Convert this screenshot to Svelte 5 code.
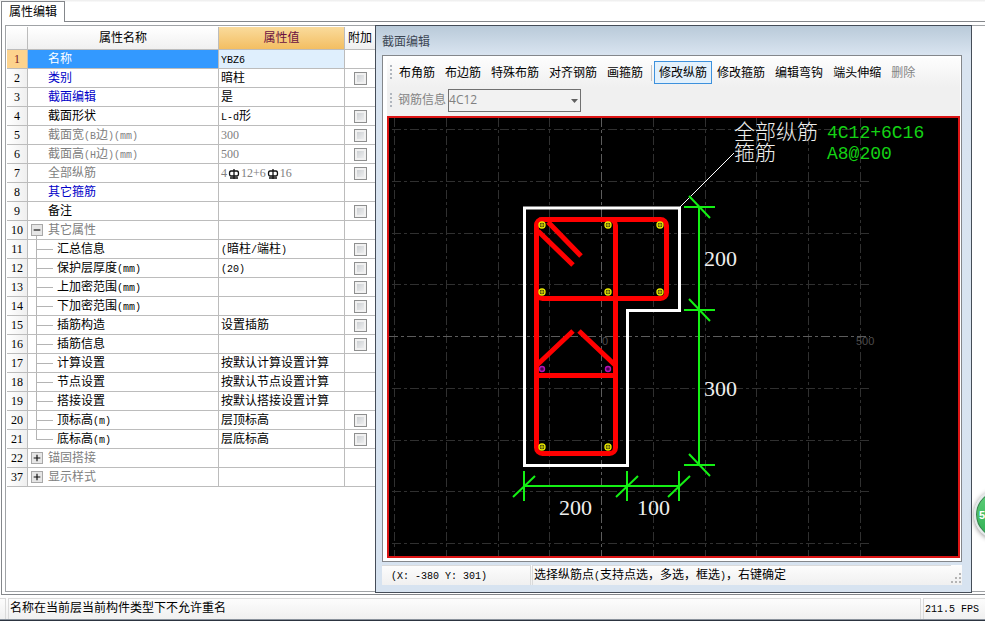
<script>
  let rows = $state([
    { no: 1, name: '名称', value: 'YBZ6', tone: 'active' },
    { no: 2, name: '类别', value: '暗柱', tone: 'key', extra: true },
    { no: 3, name: '截面编辑', value: '是', tone: 'key' },
    { no: 4, name: '截面形状', value: 'L-d形', extra: true },
    { no: 5, name: '截面宽(B边)(mm)', value: '300', tone: 'muted', extra: true },
    { no: 6, name: '截面高(H边)(mm)', value: '500', tone: 'muted', extra: true },
    { no: 7, name: '全部纵筋', value: '4#12+6#16', tone: 'muted', extra: true },
    { no: 8, name: '其它箍筋', value: '', tone: 'key' },
    { no: 9, name: '备注', value: '', extra: true },
    { no: 10, name: '其它属性', value: '', tone: 'muted', group: 'open' },
    { no: 11, name: '汇总信息', value: '(暗柱/端柱)', child: true, extra: true },
    { no: 12, name: '保护层厚度(mm)', value: '(20)', child: true, extra: true },
    { no: 13, name: '上加密范围(mm)', value: '', child: true, extra: true },
    { no: 14, name: '下加密范围(mm)', value: '', child: true, extra: true },
    { no: 15, name: '插筋构造', value: '设置插筋', child: true, extra: true },
    { no: 16, name: '插筋信息', value: '', child: true, extra: true },
    { no: 17, name: '计算设置', value: '按默认计算设置计算', child: true },
    { no: 18, name: '节点设置', value: '按默认节点设置计算', child: true },
    { no: 19, name: '搭接设置', value: '按默认搭接设置计算', child: true },
    { no: 20, name: '顶标高(m)', value: '层顶标高', child: true, extra: true },
    { no: 21, name: '底标高(m)', value: '层底标高', child: true, last: true, extra: true },
    { no: 22, name: '锚固搭接', value: '', tone: 'muted', group: 'closed' },
    { no: 37, name: '显示样式', value: '', tone: 'muted', group: 'closed' },
  ])

  const placeTools = ['布角筋', '布边筋', '特殊布筋', '对齐钢筋', '画箍筋']
  const editTools = ['修改纵筋', '修改箍筋', '编辑弯钩', '端头伸缩', '删除']
  let activeTool = $state('修改纵筋')

  const gridX = [394, 446, 498, 549, 653, 705, 756, 808, 860]
  const gridY = [129, 181, 233, 284, 388, 440, 491, 543]
  const bars = [
    [542, 225], [608, 225], [660, 225],
    [542, 292], [608, 292], [660, 292],
    [542, 447], [608, 447],
  ]
  const tieBars = [[542, 369], [608, 369]]
  const ticksY = [207, 310, 465]
  const ticksX = [524, 627, 679]

  // splits a string into half-width, full-width and rebar symbol runs
  function runs(text) {
    return text.match(/#|[\x20-\x22\x24-\x7e]+|[^\x20-\x7e]+/g) ?? []
  }

  function runClass(run) {
    if (/^[\d+]+$/.test(run)) return 'digits'
    return /^[\x20-\x7e]/.test(run) ? 'half' : 'full'
  }
</script>

{#snippet mixed(text)}
  {#each runs(text) as run}{#if run === '#'}<svg class="rebar" viewBox="0 0 12 12"><path d="M6 1v10M3 3h6q1.500 0 1.500 2.500t-1.500 2.500h-6q-1.500 0 -1.500 -2.500t1.500 -2.500zM2 10h8" /></svg>{:else}<span class={runClass(run)}>{run}</span>{/if}{/each}
{/snippet}

<div class="app">
  <div class="tabs">
    <button class="tab">属性编辑</button>
    <div class="tabs-rest"></div>
  </div>

  <main class="panel">
    <div class="frame">
      <table>
        <colgroup>
          <col class="col-no" />
          <col class="col-name" />
          <col class="col-value" />
          <col class="col-extra" />
        </colgroup>
        <thead>
          <tr>
            <th></th>
            <th>属性名称</th>
            <th class="picked">属性值</th>
            <th>附加</th>
          </tr>
        </thead>
        <tbody>
          {#each rows as row}
            <tr class={row.tone}>
              <td class="no">{row.no}</td>
              <td class="name">
                <div class="line">
                  <span class="branch" class:child={row.child} class:last={row.last} class:open={row.group === 'open'}>
                    {#if row.group}
                      <button class="toggle" aria-label={row.name}>
                        <svg viewBox="0 0 12 12"><path d={row.group === 'open' ? 'M2 6h8' : 'M2 6h8M6 2v8'} /></svg>
                      </button>
                    {/if}
                  </span>
                  <span>{@render mixed(row.name)}</span>
                </div>
              </td>
              <td class="value"><div class="line"><span>{@render mixed(row.value)}</span></div></td>
              <td class="extra">
                {#if row.extra}
                  <input type="checkbox" aria-label={row.name} bind:checked={row.checked} />
                {/if}
              </td>
            </tr>
          {/each}
        </tbody>
      </table>

      <section class="dialog">
        <header>截面编辑</header>
        <div class="content">
          <div class="toolbar">
            <span class="grip"></span>
            {#each placeTools as tool}
              <button class:active={activeTool === tool} onclick={() => (activeTool = tool)}>{tool}</button>
            {/each}
            <span class="separator"></span>
            {#each editTools as tool}
              <button
                class:active={activeTool === tool}
                disabled={tool === '删除'}
                onclick={() => (activeTool = tool)}
              >{tool}</button>
            {/each}
          </div>
          <div class="toolbar second">
            <span class="grip"></span>
            <label for="rebar-info">钢筋信息</label>
            <div class="select-wrapper">
              <select id="rebar-info" disabled>
                <option>4C12</option>
              </select>
              <svg class="arrow" viewBox="0 0 7 4"><path d="M0 0h7L3.500 4z" /></svg>
            </div>
          </div>

          <div class="canvas">
            <svg viewBox="389 118 569 438">
              <g class="grid">
                {#each gridX as x}
                  <path d="M{x + 0.5} 118V556" />
                {/each}
                {#each gridY as y}
                  <path d="M392 {y + 0.5}H870" />
                {/each}
                <path class="axis" d="M601.5 118V556M389 336.500H870" />
              </g>
              <text class="coord" x="602" y="345">0</text>
              <text class="coord" x="856" y="345">500</text>

              <path class="outline" d="M524.5 208H679.500V310.500H627.500V465.500H524.500Z" />

              <g class="stirrup">
                <rect x="536.5" y="219.5" width="79" height="234" rx="6" />
                <rect x="536.5" y="219.5" width="130" height="79" rx="6" />
                <path d="M536 375.500H615" />
                <path d="M538 231L573 265M548 222L581 256" />
                <path d="M537 365L573 331M579 331L615 365" />
              </g>

              {#each bars as [x, y]}
                <circle class="bar" cx={x} cy={y} r="3" />
                <path class="bar-cross" d="M{x - 2} {y}h4M{x} {y - 2}v4" />
              {/each}
              {#each tieBars as [x, y]}
                <circle class="bar tie" cx={x} cy={y} r="2.5" />
              {/each}

              <path class="leader" d="M680 207L734 153" />

              <g class="dimension">
                <path d="M699 207V465M524 486H679" />
                {#each ticksY as y}
                  <path d="M684 {y}h31M689 {y - 11}l21 22" />
                {/each}
                {#each ticksX as x}
                  <path d="M{x} 471v30M{x - 11} 497l22 -21" />
                {/each}
              </g>

              <text class="size" x="704" y="266">200</text>
              <text class="size" x="704" y="396">300</text>
              <text class="size" x="559" y="515">200</text>
              <text class="size" x="637" y="515">100</text>
              <text class="caption" x="734" y="139">全部纵筋</text>
              <text class="caption" x="734" y="160">箍筋</text>
              <text class="spec" x="827" y="138">4C12+6C16</text>
              <text class="spec" x="827" y="159">A8@200</text>
            </svg>
          </div>
        </div>
        <footer>
          <span class="pane position">{@render mixed('(X: -380 Y: 301)')}</span>
          <span class="pane hint">{@render mixed('选择纵筋点(支持点选，多选，框选)，右键确定')}</span>
          <svg class="resize" viewBox="0 0 11 11">
            <path d="M8 0h2v2h-2zM4 4h2v2h-2zM8 4h2v2h-2zM0 8h2v2h-2zM4 8h2v2h-2zM8 8h2v2h-2z" />
          </svg>
        </footer>
      </section>
    </div>
  </main>

  <footer class="status">
    <span class="pane stub"></span>
    <span class="pane message">名称在当前层当前构件类型下不允许重名</span>
    <span class="pane fps">{@render mixed('211.5 FPS')}</span>
  </footer>
  <div class="edge"></div>

  <button class="bubble">5</button>
</div>

<style>
  :global(body) {
    margin: 0;
    background: #fff;
  }

  .app {
    position: relative;
    display: flex;
    flex-direction: column;
    min-height: 100vh;
    overflow: hidden;
    font-family: 'Liberation Serif', 'Noto Sans CJK SC', sans-serif;
    font-size: 12px;
    line-height: 18px;
    color: #000;
  }

  .app * {
    box-sizing: border-box;
  }

  button,
  select {
    margin: 0;
    padding: 0;
    border: 0;
    background: none;
    font: inherit;
    color: inherit;
  }

  .half {
    font-family: 'Liberation Mono', monospace;
    font-size: 10px;
    line-height: 12px;
    white-space: pre;
  }

  .tabs {
    display: flex;
    height: 22px;
    padding: 1px 0 0 1px;
    background: linear-gradient(#f0f0f0 1px, #fff 2px);
  }

  .tab {
    width: 64px;
    border: 1px solid #84878b;
    border-bottom: 0;
    background: #fff;
  }

  .tabs-rest {
    flex: 1;
    border-bottom: 1px solid #84878b;
  }

  .panel {
    flex: 1;
    display: flex;
    margin-left: 1px;
    padding: 3px 0 2px 3px;
    border-left: 1px solid #84878b;
    border-bottom: 1px solid #84878b;
  }

  .frame {
    flex: 1;
    display: flex;
    align-items: flex-start;
    padding: 1px 0 0 1px;
    border: 1px solid #a0a3a6;
    border-right: 0;
  }

  table {
    width: 368px;
    flex: none;
    table-layout: fixed;
    border-collapse: separate;
    border-spacing: 0;
    font-size: 12px;
  }

  .col-no {
    width: 21px;
  }

  .col-name {
    width: 191px;
  }

  .col-value {
    width: 126px;
  }

  .col-extra {
    width: 30px;
  }

  th,
  td {
    padding: 0;
    border-right: 1px solid #bcbcbc;
    border-bottom: 1px solid #bcbcbc;
    white-space: nowrap;
  }

  th:last-child,
  td:last-child {
    border-right: 0;
  }

  th {
    height: 23px;
    font-weight: 400;
    background: linear-gradient(#fff, #f0f0f0);
  }

  th.picked {
    color: #6b1040;
    background: linear-gradient(#fadb9c, #f3be62);
  }

  td {
    height: 19px;
    line-height: 18px;
  }

  .no {
    text-align: center;
    background: linear-gradient(90deg, #fff, #efefef);
  }

  .line {
    display: flex;
    height: 18px;
  }

  .branch {
    display: flex;
    align-items: center;
    width: 20px;
    padding-left: 3px;
  }

  .branch.child {
    width: 29px;
    padding: 0;
    background:
      linear-gradient(#b4b4b4, #b4b4b4) 8px 0 / 1px 100% no-repeat,
      linear-gradient(#b4b4b4, #b4b4b4) 8px 9px / 17px 1px no-repeat;
  }

  .branch.last {
    background:
      linear-gradient(#b4b4b4, #b4b4b4) 8px 0 / 1px 9px no-repeat,
      linear-gradient(#b4b4b4, #b4b4b4) 8px 9px / 17px 1px no-repeat;
  }

  .branch.open {
    background: linear-gradient(#b4b4b4, #b4b4b4) 8px 100% / 1px 4px no-repeat;
  }

  .toggle {
    display: flex;
    width: 12px;
    height: 12px;
    border: 1px solid #a8a8a8;
    background: #e6e6e6;
  }

  .toggle svg {
    width: 10px;
    height: 10px;
    fill: none;
    stroke: #111;
    stroke-width: 1.4;
  }

  .value {
    padding-left: 2px;
  }

  .extra {
    text-align: center;
    font-size: 0;
  }

  input[type='checkbox'] {
    appearance: none;
    width: 13px;
    height: 13px;
    margin: 0;
    border: 1px solid #8e8f8f;
    background: linear-gradient(135deg, #c4c8cc, #f6f6f6);
    box-shadow: inset 0 0 0 2px #f1f1f1;
    vertical-align: middle;
  }

  input[type='checkbox']:checked {
    background: #3399ff;
  }

  .key .name {
    color: #0000c8;
  }

  .muted .name,
  .muted .value {
    color: #808080;
  }

  .active .no {
    color: #7a1a28;
    background: #fdd38d;
  }

  .active .name {
    color: #fff;
    background: #3399ff;
  }

  .active .value {
    background: #dfeffd;
  }

  .rebar {
    width: 12px;
    height: 12px;
    margin: 0 1px;
    fill: none;
    stroke: #111;
    stroke-width: 1.3;
    vertical-align: middle;
  }

  .dialog {
    flex: 1;
    min-width: 0;
    align-self: stretch;
    display: flex;
    flex-direction: column;
    margin: -2px 13px -2px 0;
    padding: 0 9px 7px 6px;
    border: 1px solid #454d58;
    background: linear-gradient(#b9cad9, #d9e4f0 29px, #d7e3f0);
    z-index: 1;
  }

  .dialog header {
    height: 29px;
    line-height: 33px;
    color: #3c4654;
  }

  .content {
    flex: 1;
    display: flex;
    flex-direction: column;
    padding: 2px 1px 3px 4px;
    border: 1px solid #84878b;
    background: #fff;
  }

  .toolbar {
    display: flex;
    align-items: center;
    height: 29px;
    padding-left: 3px;
    background: linear-gradient(#fdfdfd, #f0f0f0);
  }

  .toolbar.second {
    padding-bottom: 3px;
    background: #f0f0f0;
  }

  .grip {
    width: 2px;
    height: 15px;
    margin-right: 2px;
    background: repeating-linear-gradient(#b0b6be 0 2px, transparent 2px 4px);
  }

  .toolbar button {
    height: 23px;
    padding: 0 4px;
    border: 1px solid transparent;
    white-space: nowrap;
  }

  .toolbar button.active {
    border-color: #3d91dd;
    background: #e3f1fc;
  }

  .toolbar button:disabled {
    color: #848484;
  }

  .separator {
    width: 1px;
    height: 16px;
    margin: 0 2px 0 3px;
    background: #c4c4c4;
  }

  label {
    margin-left: 4px;
    color: #848484;
  }

  .select-wrapper {
    position: relative;
    margin-left: 2px;
  }

  select {
    display: block;
    appearance: none;
    width: 133px;
    height: 23px;
    border: 1px solid #707070;
    border-radius: 0;
    background: #f2f2f2;
    font-family: 'Open Sans', sans-serif;
    font-size: 12px;
    color: #808080;
    opacity: 1;
  }

  .arrow {
    position: absolute;
    top: 10px;
    right: 3px;
    width: 7px;
    height: 4px;
    fill: #606060;
    pointer-events: none;
  }

  .canvas {
    flex: 1;
    display: flex;
    min-height: 0;
    border: 2px solid #dc1414;
    background: #000;
  }

  .canvas svg {
    flex: 1;
    min-width: 0;
  }

  .grid path {
    fill: none;
    stroke: #303030;
    stroke-dasharray: 9 3 3 3;
  }

  .grid .axis {
    stroke: #5c5c5c;
  }

  .coord {
    font-family: 'Liberation Sans', sans-serif;
    font-size: 11px;
    fill: #4c4c4c;
  }

  .outline {
    fill: none;
    stroke: #fff;
    stroke-width: 3;
  }

  .stirrup {
    fill: none;
    stroke: #f00;
    stroke-width: 5;
  }

  .bar {
    fill: #111;
    stroke: #e8e800;
    stroke-width: 1.4;
  }

  .bar-cross {
    stroke: #e8e800;
  }

  .bar.tie {
    fill: #4a0050;
    stroke: #b414b4;
  }

  .leader {
    stroke: #fff;
  }

  .dimension {
    fill: none;
    stroke: #14f014;
    stroke-width: 2;
  }

  .size {
    font-family: 'Liberation Serif', serif;
    font-size: 22px;
    fill: #eee;
  }

  .caption {
    font-family: 'Liberation Serif', 'Noto Sans CJK SC', sans-serif;
    font-size: 21px;
    font-weight: 300;
    fill: #eee;
  }

  .spec {
    font-family: 'Liberation Mono', monospace;
    font-size: 18px;
    fill: #14d214;
  }

  .dialog footer {
    display: flex;
    align-items: flex-end;
    height: 20px;
    margin-top: 3px;
    background: linear-gradient(#fdfdfd, #f0f0f0);
  }

  .pane {
    border-top: 1px solid #dadada;
    border-right: 1px solid #dadada;
    white-space: nowrap;
  }

  .dialog .pane {
    height: 20px;
  }

  .position {
    width: 149px;
    padding-left: 9px;
  }

  .hint {
    flex: 1;
    margin-left: 1px;
    padding-left: 1px;
    border-left: 1px solid #dadada;
    border-right: 0;
  }

  .resize {
    width: 11px;
    height: 11px;
    margin-bottom: 1px;
    fill: #b4b4b4;
  }

  .status {
    display: flex;
    height: 24px;
    padding-top: 3px;
    background: linear-gradient(#fff, #f0f0f0);
  }

  .stub {
    width: 6px;
  }

  .message {
    flex: 1;
    margin-left: 2px;
    padding-left: 1px;
    border-left: 1px solid #dadada;
  }

  .fps {
    width: 62px;
    margin-left: 2px;
    padding-left: 1px;
    border-left: 1px solid #dadada;
    border-right: 0;
  }

  .edge {
    height: 2px;
    background: linear-gradient(#8a929c 1px, #2c3440 1px);
  }

  /* floating badge that hangs over the window edge */
  .bubble {
    position: absolute;
    top: 489px;
    right: -40px;
    width: 51px;
    height: 51px;
    padding-left: 3px;
    border: 2px solid #e4e8ea;
    border-radius: 50%;
    background: linear-gradient(#5fd07a, #2fae52);
    box-shadow: inset 0 0 0 1px #3d7d52, 0 1px 5px #888;
    color: #fff;
    font-family: 'Liberation Sans', sans-serif;
    font-size: 11px;
    font-weight: 700;
    text-align: left;
    z-index: 2;
  }
</style>
